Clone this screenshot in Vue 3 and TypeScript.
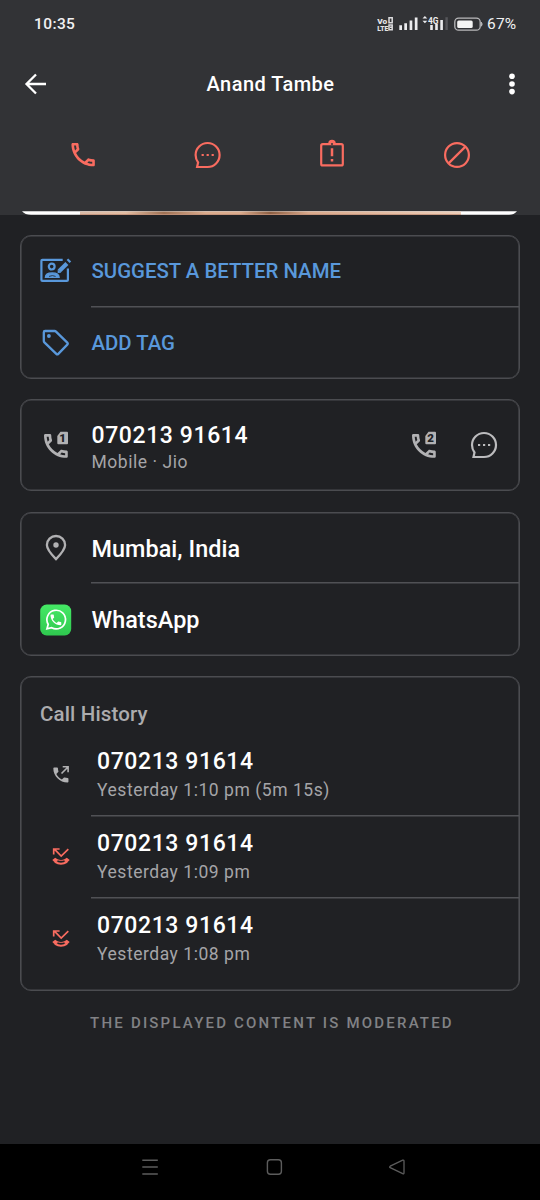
<script setup lang="ts">
interface CallEntry {
  number: string
  detail: string
  missed: boolean
}

const calls: CallEntry[] = [
  { number: '070213 91614', detail: 'Yesterday 1:10 pm (5m 15s)', missed: false },
  { number: '070213 91614', detail: 'Yesterday 1:09 pm', missed: true },
  { number: '070213 91614', detail: 'Yesterday 1:08 pm', missed: true },
]

const phonePath =
  'M6.54 5c.06.89.21 1.76.45 2.59l-1.2 1.2c-.41-1.2-.67-2.47-.76-3.79h1.51m9.86 12.02c.85.24 1.72.39 2.6.45v1.49c-1.32-.09-2.59-.35-3.8-.75l1.2-1.19M7.5 3H4c-.55 0-1 .45-1 1 0 9.39 7.61 17 17 17 .55 0 1-.45 1-1v-3.49c0-.55-.45-1-1-1-1.24 0-2.45-.2-3.57-.57a.84.84 0 0 0-.31-.05c-.26 0-.51.1-.71.29l-2.2 2.2a15.149 15.149 0 0 1-6.59-6.59l2.2-2.2c.28-.28.36-.67.25-1.02A11.36 11.36 0 0 1 8.5 4c0-.55-.45-1-1-1z'
const phoneSolidPath =
  'M6.62 10.79c1.44 2.83 3.76 5.14 6.59 6.59l2.2-2.2c.27-.27.67-.36 1.02-.24 1.12.37 2.33.57 3.57.57.55 0 1 .45 1 1V20c0 .55-.45 1-1 1-9.39 0-17-7.61-17-17 0-.55.45-1 1-1h3.5c.55 0 1 .45 1 1 0 1.25.2 2.45.57 3.57.11.35.03.74-.25 1.02l-2.2 2.2z'
const chatPath = 'M5.500 28H16A12 12 0 1 0 4 16C4 19.400 5.200 21.700 6.500 23.500Z'
</script>

<template>
  <div class="screen">
    <header class="header">
      <div class="status">
        <span class="clock">10:35</span>
        <svg class="signals" width="106" height="20" viewBox="0 0 106 20">
          <g class="tiny">
            <text x="0.300" y="9.500" textLength="10" lengthAdjust="spacingAndGlyphs">Vo</text>
            <text x="0.300" y="16.500" textLength="11" lengthAdjust="spacingAndGlyphs">LTE</text>
          </g>
          <path d="M12 3.800h3.200v5H12zM12 11h3.200v4.800H12zM13 13.300h1.500" fill="none" stroke="#dcdcde" stroke-width="1.500" />
          <path d="M22.300 11.200h2.700v4.800h-2.700zM27.300 9.200H30V16h-2.700zM32.600 6.400h2.700V16h-2.700zM37.800 3.400h2.700V16h-2.700z" fill="#ececee" />
          <path d="M47.900 2l2.400 2.600h-4.800zM47.900 9.200l2.400-2.500h-4.800zM53.200 11h2.600v5h-2.600zM58.200 10h2.600v6h-2.600zM63.300 6h2.600v10h-2.600z" fill="#ececee" />
          <path d="M68.400 3.200h2.400V16h-2.400z" fill="#55565a" />
          <text class="gen" x="51" y="9.500" textLength="10.500" lengthAdjust="spacingAndGlyphs">4G</text>
          <rect x="77.800" y="4.200" width="25.400" height="12" rx="3.800" fill="none" stroke="#b9b9bb" stroke-width="1.300" />
          <rect x="80.200" y="6.500" width="15.500" height="7.400" rx="1.500" fill="#f4f4f4" />
          <path d="M104.400 8.200q1.500 1.800 0 4z" fill="#b9b9bb" stroke="#b9b9bb" />
        </svg>
        <span class="percent">67%</span>
      </div>
      <div class="toolbar">
        <svg width="24" height="24" viewBox="0 0 24 24">
          <path d="M22 12H3M12 2.500 2.500 12l9.500 9.500" fill="none" stroke="#fff" stroke-width="2.300" />
        </svg>
        <h1><span>Anand Tambe</span></h1>
        <svg width="24" height="24" viewBox="0 0 24 24" fill="#fff">
          <circle cx="12" cy="4.200" r="2.800" /><circle cx="12" cy="12" r="2.800" /><circle cx="12" cy="19.600" r="2.800" />
        </svg>
      </div>
      <nav class="actions">
        <svg width="32" height="32" viewBox="-.4 0 24.600 24.600"><path :d="phonePath" fill="#f96c60" /></svg>
        <svg width="32" height="32" viewBox=".4 0 32 32" fill="none" stroke="#f96c60" stroke-width="2.200">
          <path :d="chatPath" />
          <path d="M10 16h2.200M15 16h2.200M20 16h2.200" />
        </svg>
        <svg width="32" height="32" viewBox="0 0 32 32" fill="none" stroke="#f96c60" stroke-width="2.200">
          <rect x="5.200" y="5.200" width="21.600" height="21.200" rx="1.500" />
          <path d="M13 4.500a3 3 0 0 1 6 0" fill="#f96c60" stroke-width="1.500" />
          <circle cx="16" cy="4.900" r="1" fill="#323336" stroke="none" />
          <path d="M16 9.300v8M16 19.900v2.500" stroke-width="2.500" />
        </svg>
        <svg width="32" height="32" viewBox="0 0 32 32" fill="none" stroke="#f96c60" stroke-width="2.200">
          <circle cx="16" cy="16" r="11.900" />
          <path d="M7.600 24.400 24.400 7.600" />
        </svg>
      </nav>
      <div class="photo">
        <svg width="496" height="5" viewBox="0 -.7 496 5">
          <defs>
            <linearGradient id="skin">
              <stop offset="0" stop-color="#d9bba8" />
              <stop offset=".12" stop-color="#e3bda2" />
              <stop offset=".22" stop-color="#9f7153" />
              <stop offset=".33" stop-color="#dbac8d" />
              <stop offset=".42" stop-color="#dbac8d" />
              <stop offset=".5" stop-color="#8d5f42" />
              <stop offset=".6" stop-color="#d9a98b" />
              <stop offset="1" stop-color="#edcfba" />
            </linearGradient>
          </defs>
          <path d="M0 .5h495Q492 4 487 4H9Q3 4 0 .5z" fill="#fff" />
          <path d="M58 .8h381V4H58z" fill="url(#skin)" />
          <path d="M58 3.200h381v.8H58z" fill="#c08b72" />
        </svg>
      </div>
    </header>

    <main class="cards">
      <section class="card">
        <div class="row">
          <div class="icon">
            <svg width="32" height="32" viewBox="0 0 32 32" fill="none" stroke="#5998db" stroke-width="2.200">
              <path d="M22.700 4.800H2.400a1 1 0 0 0-1 1v19.100a1 1 0 0 0 1 1h24.500a1 1 0 0 0 1-1V13.500" />
              <circle cx="11.700" cy="11.600" r="2.900" />
              <path d="M5.300 22.500q0-4.600 6.900-4.600t7 4.600z" fill="#5998db" stroke-width="1.200" />
              <path d="M9 21.400q3.400-1.600 6.600 0" stroke="#202124" stroke-width=".8" />
              <path d="M19.300 16 26.900 8.400" stroke-width="4.200" />
              <path d="M17.700 18v-3.600l3.600 3.400z" fill="#5998db" stroke="none" />
              <path d="m28.100 6.600 1.600-1.600" stroke-width="4.200" />
            </svg>
          </div>
          <span class="link-text">SUGGEST A BETTER NAME</span>
        </div>
        <div class="row second divided">
          <div class="icon">
            <svg width="32" height="32" viewBox=".6 0 32 32" fill="none" stroke="#5998db" stroke-width="2.300" stroke-linejoin="round">
              <path d="M5.700 4h9.500q.8 0 1.400.6l11.300 11q1 1 0 2l-9 9.300q-1 1-2 0L5 15.400q-.6-.6-.6-1.400V5.300Q4.400 4 5.700 4z" />
              <circle cx="9.500" cy="9" r="1.900" fill="#5998db" stroke="none" />
            </svg>
          </div>
          <span class="link-text">ADD TAG</span>
        </div>
      </section>

      <section class="card phone-card">
        <div class="icon">
          <svg width="32" height="32" viewBox="0 0 32 32">
            <path :d="phonePath" transform="translate(.05 1.100) scale(1.320)" fill="#b1b1b3" />
            <path d="M17.300 7 20.500 2.800H27q1 0 1 1v10.500q0 1-1 1h-8.700q-1 0-1-1z" fill="#b1b1b3" />
            <text class="sim" x="22.500" y="13">1</text>
          </svg>
        </div>
        <div class="lines">
          <div class="number">070213 91614</div>
          <div class="detail">Mobile · Jio</div>
        </div>
        <div class="side">
          <svg width="32" height="32" viewBox="0 0 32 32">
            <path :d="phonePath" transform="translate(.05 1.100) scale(1.320)" fill="#b1b1b3" />
            <path d="M17.300 7 20.500 2.800H27q1 0 1 1v10.500q0 1-1 1h-8.700q-1 0-1-1z" fill="#b1b1b3" />
            <text class="sim" x="22.500" y="13">2</text>
          </svg>
          <svg width="32" height="32" viewBox="0 0 32 32" fill="none" stroke="#bcbcbe" stroke-width="2.200">
            <path :d="chatPath" />
            <path d="M10 16h2.200M15 16h2.200M20 16h2.200" />
          </svg>
        </div>
      </section>

      <section class="card">
        <div class="row place">
          <div class="icon">
            <svg width="32" height="32" viewBox="0 0 32 32" fill="none" stroke="#b1b1b3" stroke-width="2.300">
              <path d="M16 27.100C10 20.900 6.900 17 6.900 12.900a9.100 8.900 0 0 1 18.200 0C25.100 17 22 20.900 16 27.100z" />
              <circle cx="16" cy="13" r="2.700" fill="#b1b1b3" stroke="none" />
            </svg>
          </div>
          <span class="title">Mumbai, India</span>
        </div>
        <div class="row app divided">
          <div class="icon">
            <svg width="32" height="32" viewBox=".3 0 32 32">
              <defs>
                <linearGradient id="wa" x2="0" y2="1">
                  <stop offset="0" stop-color="#45e965" />
                  <stop offset="1" stop-color="#2fc84f" />
                </linearGradient>
              </defs>
              <rect x=".5" y=".5" width="31" height="31" rx="6.500" fill="url(#wa)" />
              <path d="M7.200 24.900 8.500 20.300A9.300 9.300 0 1 1 12 23.700z" fill="none" stroke="#fff" stroke-width="1.700" />
              <path :d="phoneSolidPath" transform="translate(9 8.600) scale(.6)" fill="#fff" />
            </svg>
          </div>
          <span class="title">WhatsApp</span>
        </div>
      </section>

      <section class="card history">
        <h2><span>Call History</span></h2>
        <div v-for="(call, i) in calls" :key="i" class="call" :class="{ divided: i > 0 }">
          <div class="call-icon">
            <svg v-if="call.missed" width="20" height="20" viewBox="0 0 20 20">
              <path d="M17.300 3.200 10.200 10 3.400 3.200M2.700 8.400V3H8.600" fill="none" stroke="#f96c60" stroke-width="1.700" />
              <path d="M4.200 11.800 1.300 14l2.600 2.600 2.500-1.200.2-1.200q3.400 1.300 6.800 0l.2 1.200 2.500 1.200 2.600-2.600-2.900-2.200C14.500 13 12.500 14 10 14s-4.500-1-5.800-2.200z" fill="#f96c60" />
              <path d="M4 15.800Q10 19.500 16 15.800" fill="none" stroke="#f96c60" stroke-width="2" />
            </svg>
            <svg v-else width="20" height="20" viewBox="0 0 20 20">
              <path :d="phoneSolidPath" transform="translate(-.2 .9) scale(.84)" fill="#b1b1b3" />
              <path d="M10.500 9.500 16.500 3.500M11.700 2.800h5.400v5.500" fill="none" stroke="#b1b1b3" stroke-width="1.600" />
            </svg>
          </div>
          <div class="lines">
            <div class="number">{{ call.number }}</div>
            <div class="detail">{{ call.detail }}</div>
          </div>
        </div>
      </section>
      <p class="note">THE DISPLAYED CONTENT IS MODERATED</p>
    </main>

    <footer class="navbar">
      <svg width="20" height="20" viewBox="0 0 20 20"><path d="M2.300 3.200h15.500M2.300 10h15.500M2.300 17h15.500" stroke="#5c5c5c" stroke-width="1.400" /></svg>
      <svg width="20" height="20" viewBox="-.6 0 20 20"><rect x="2.800" y="2.700" width="14" height="14.600" rx="3" fill="none" stroke="#5c5c5c" stroke-width="1.400" /></svg>
      <svg width="20" height="20" viewBox="0 0 20 20"><path d="M3.200 9.200 15.700 3.200q1.300-.5 1.300 1v11.500q0 1.500-1.300 1L3.200 10.700q-1.200-.7 0-1.500z" fill="none" stroke="#5c5c5c" stroke-width="1.300" /></svg>
    </footer>
  </div>
</template>

<style>
body {
  margin: 0;
  background: #202124;
}
</style>

<style scoped>
.screen {
  width: 540px;
  height: 1200px;
  display: flex;
  flex-direction: column;
  background: #202124;
  color: #fff;
  font-family: Roboto, sans-serif;
  overflow: hidden;
}
svg {
  display: block;
  flex: none;
}
.header {
  height: 215px;
  flex: none;
  display: flex;
  flex-direction: column;
  background: #323336;
}
.status {
  height: 48px;
  display: flex;
  align-items: center;
  padding: 0 23px 0 34px;
  font-size: 15.500px;
  line-height: 20px;
  font-weight: 500;
  color: #f1f1f2;
}
.clock {
  letter-spacing: 0.4px;
}
.signals {
  margin: 0 4px 0 auto;
}
.tiny text {
  font: 900 7.800px Roboto, sans-serif;
  fill: #e4e4e6;
}
.gen {
  font: 700 9px Roboto, sans-serif;
  fill: #ececee;
}
.percent {
  width: 30px;
  white-space: nowrap;
  font-weight: 400;
  letter-spacing: 0.2px;
}
.toolbar {
  height: 72px;
  display: flex;
  align-items: center;
  padding: 0 16px 0 24px;
}
h1,
h2 {
  margin: 0;
  font-weight: 500;
}
h1 {
  flex: 1;
  margin-right: 7px;
  text-align: center;
  font-size: 20px;
  line-height: 24px;
  letter-spacing: 0.45px;
}
.actions {
  height: 70px;
  display: flex;
  align-items: center;
  justify-content: space-between;
  padding: 0 67px;
}
.photo {
  margin-top: auto;
  padding: 0 22px;
}
.cards {
  flex: 1;
  display: flex;
  flex-direction: column;
  padding: 20px 20px 0;
}
.card {
  box-sizing: border-box;
  height: 144px;
  flex: none;
  border: 1px solid #4b4c50;
  box-shadow: inset 0 0 0 0.600px #4b4c50;
  border-radius: 11px;
  margin-bottom: 20px;
}
.row {
  display: flex;
  align-items: center;
  height: 70px;
}
.row.second {
  height: 74px;
}
.row.place {
  height: 69px;
}
.row.place .title {
  padding-top: 2px;
}
.row.app {
  height: 75px;
}
.divided {
  background: linear-gradient(#505155, #505155) 70px 0 / 100% 1.500px no-repeat;
}
.icon {
  width: 70.500px;
  flex: none;
  box-sizing: border-box;
  padding-left: 19px;
}
.link-text {
  color: #5998db;
  font-size: 20.400px;
  line-height: 24px;
  font-weight: 500;
}
.title {
  font-size: 23.400px;
  line-height: 28px;
  font-weight: 500;
  letter-spacing: 0.050px;
}
.phone-card {
  height: 92px;
  margin-bottom: 21px;
  display: flex;
  align-items: center;
}
.lines {
  padding-top: 4px;
}
.phone-card .lines {
  padding-top: 6px;
}
.phone-card .detail {
  line-height: 25px;
}
.number {
  font-size: 23px;
  line-height: 28px;
  font-weight: 500;
  letter-spacing: 0.6px;
}
.detail {
  color: #a5a5a8;
  font-size: 17.500px;
  line-height: 28px;
  letter-spacing: 0.540px;
}
.side {
  display: flex;
  gap: 28px;
  margin: 0 19px 0 auto;
}
.sim {
  font: 900 11.500px Roboto, sans-serif;
  fill: #202124;
  text-anchor: middle;
}
.history {
  height: 315px;
  margin-bottom: 20px;
}
h2 {
  height: 56px;
  box-sizing: border-box;
  padding: 25px 0 0 19px;
  font-size: 20.500px;
  line-height: 24px;
  letter-spacing: 0.150px;
  color: #acacae;
}
.call {
  height: 82px;
  display: flex;
  align-items: center;
}
.call-icon {
  width: 76px;
  box-sizing: border-box;
  padding-left: 30px;
  flex: none;
}
.note {
  margin: 0;
  padding-left: 4px;
  text-align: center;
  font-size: 15px;
  line-height: 24px;
  font-weight: 500;
  color: #818285;
  letter-spacing: 2.200px;
}
.navbar {
  height: 56px;
  flex: none;
  box-sizing: border-box;
  display: flex;
  justify-content: space-between;
  padding: 13px 133px 0 140px;
  background: #000;
}
</style>
